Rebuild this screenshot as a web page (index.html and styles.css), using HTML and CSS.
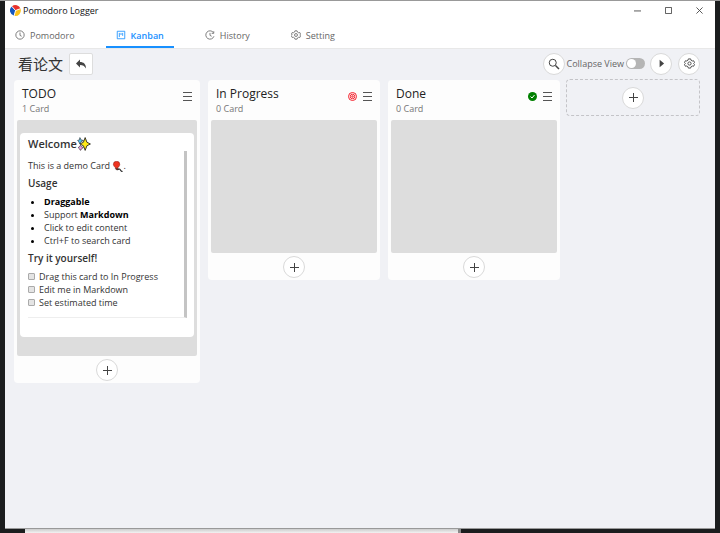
FILE: index.html
```html
<!DOCTYPE html>
<html lang="en">

<head>
  <meta charset="UTF-8" />
  <meta name="viewport" content="width=device-width, initial-scale=1.0" />
  <title>Pomodoro Logger</title>
  <link rel="stylesheet" href="styles.css">
</head>

<body>
  <div class="app">
    <header class="title-bar">
      <svg class="logo" viewBox="0 0 24 24">
        <path d="M12 12 L4 3 A12 12 0 0 1 23 8 Z" fill="#e8322c" />
        <path d="M12 12 L4 3 A12 12 0 0 0 9 23.6 Z" fill="#1557c0" />
        <path d="M12 12 L23 8 A12 12 0 0 1 9 23.6 Z" fill="#fcc21b" />
        <path d="M12 12 L4 3 M12 12 L23 8 M12 12 L9 23.6" stroke="#fff" stroke-width="2" />
      </svg>
      <span class="app-name">Pomodoro Logger</span>
      <div class="window-controls">
        <button class="window-button" aria-label="Minimize"><svg viewBox="0 0 8 8"><path d="M0 4.5H8" /></svg></button>
        <button class="window-button" aria-label="Maximize"><svg viewBox="0 0 8 8"><path d="M.5 .5H7.5V7.5H.5Z" /></svg></button>
        <button class="window-button" aria-label="Close"><svg viewBox="0 0 8 8"><path d="M.5 .5L7.5 7.5M7.5 .5L.5 7.5" /></svg></button>
      </div>
    </header>

    <nav class="tabs">
      <a href="#pomodoro" class="tab">
        <svg class="icon" viewBox="0 0 24 24"><circle cx="12" cy="12" r="10" /><path d="M12 6V13L16 15" /></svg>
        Pomodoro
      </a>
      <a href="#kanban" class="tab active">
        <svg class="icon" viewBox="0 0 24 24"><path d="M3 3H21V21H3ZM8 7V17M12 7V12M16 7V14" /></svg>
        Kanban
      </a>
      <a href="#history" class="tab">
        <svg class="icon" viewBox="0 0 24 24"><path d="M20 6A10 10 0 1 0 21.500 15M21 3V8H16M12 7V13L16 15" /></svg>
        History
      </a>
      <a href="#setting" class="tab">
        <svg class="icon" viewBox="0 0 24 24"><path d="M9.500 2H14.500L15.500 5L18 6.500L21 6L23 10L21 12L23 14L21 18L18 17.500L15.500 19L14.500 22H9.500L8.500 19L6 17.500L3 18L1 14L3 12L1 10L3 6L6 6.500L8.500 5Z" /><circle cx="12" cy="12" r="3.500" /></svg>
        Setting
      </a>
    </nav>

    <main class="kanban">
      <div class="toolbar">
        <h1 class="board-name">看论文</h1>
        <button class="back-button" aria-label="Back">
          <svg class="icon" viewBox="0 0 24 24"><path class="solid" d="M10 3V8C17 8 22 12 22 21C19 16 16 14 10 14V19L2 11Z" /></svg>
        </button>
        <div class="tools">
          <button class="round-button search" aria-label="Search">
            <svg class="icon" viewBox="0 0 24 24"><circle cx="9.500" cy="9.500" r="7" /><path d="M15 15L22 22" stroke-width="3" /></svg>
          </button>
          <label class="switch">Collapse View <input type="checkbox" class="switch-input"></label>
          <button class="round-button play" aria-label="Start">
            <svg class="icon" viewBox="0 0 24 24"><path class="solid" d="M7 2L19 12L7 22Z" /></svg>
          </button>
          <button class="round-button config" aria-label="Board settings">
            <svg class="icon" viewBox="0 0 24 24"><path d="M9.500 2H14.500L15.500 5L18 6.500L21 6L23 10L21 12L23 14L21 18L18 17.500L15.500 19L14.500 22H9.500L8.500 19L6 17.500L3 18L1 14L3 12L1 10L3 6L6 6.500L8.500 5Z" /><circle cx="12" cy="12" r="3.500" /></svg>
          </button>
        </div>
      </div>

      <div class="board">
        <section class="column wide">
          <div class="column-header">
            <div class="column-info">
              <h2>TODO</h2>
              <p>1 Card</p>
            </div>
            <button class="menu-button" aria-label="TODO menu"><svg viewBox="0 0 9 9"><path d="M0 .5H9M0 4.500H9M0 8.500H9" /></svg></button>
          </div>
          <div class="card-list">
            <article class="card">
              <h3 class="card-title">Welcome<svg class="emoji" viewBox="0 0 24 24">
                <path d="M5 1L7 5L11 6L7 8L5 12L3 8L1 6L4 5Z" fill="#4fc3f7" stroke="#222" />
                <path d="M6 14L8 17L11 18L8 20L6 23L4 20L2 18L4 17Z" fill="#e79be0" stroke="#222" />
                <path d="M14 1L17 9L23 12L17 15L14 23L11 15L5 12L11 9Z" fill="#ffea19" stroke="#222" stroke-width="1.500" />
              </svg></h3>
              <div class="card-content">
                <p>This is a demo Card <svg class="emoji small" viewBox="0 0 24 24">
                  <path d="M10 16C13 23 15 14 18 19S21 22 23 23" fill="none" stroke="#222" stroke-width="2.500" />
                  <path d="M10 17C5 13 3 10 3 7A7 6.500 0 0 1 17 7C17 11 14 14 10 17Z" fill="#ef3320" stroke="#7d1710" />
                  <path d="M7 16H14L12 19H9Z" fill="#b5281b" />
                </svg>.</p>
                <h4>Usage</h4>
                <ul class="bullets">
                  <li><strong>Draggable</strong></li>
                  <li>Support <strong>Markdown</strong></li>
                  <li>Click to edit content</li>
                  <li>Ctrl+F to search card</li>
                </ul>
                <h4>Try it yourself!</h4>
                <ul class="tasks">
                  <li><label><input type="checkbox">Drag this card to In Progress</label></li>
                  <li><label><input type="checkbox">Edit me in Markdown</label></li>
                  <li><label><input type="checkbox">Set estimated time</label></li>
                </ul>
              </div>
            </article>
          </div>
          <button class="round-button add" aria-label="Add card"><svg viewBox="0 0 9 9"><path d="M4.500 0V9M0 4.500H9" /></svg></button>
        </section>

        <section class="column">
          <div class="column-header">
            <div class="column-info">
              <h2>In Progress</h2>
              <p>0 Card</p>
            </div>
            <svg class="mark target" viewBox="0 0 18 18"><circle cx="9" cy="9" r="8" /><circle cx="9" cy="9" r="4.500" /><circle cx="9" cy="9" r="1.500" /></svg>
            <button class="menu-button" aria-label="In Progress menu"><svg viewBox="0 0 9 9"><path d="M0 .5H9M0 4.500H9M0 8.500H9" /></svg></button>
          </div>
          <div class="card-list"></div>
          <button class="round-button add" aria-label="Add card"><svg viewBox="0 0 9 9"><path d="M4.500 0V9M0 4.500H9" /></svg></button>
        </section>

        <section class="column">
          <div class="column-header">
            <div class="column-info">
              <h2>Done</h2>
              <p>0 Card</p>
            </div>
            <svg class="mark done" viewBox="0 0 18 18"><circle cx="9" cy="9" r="9" /><path d="M5 9L8 12L13 6" /></svg>
            <button class="menu-button" aria-label="Done menu"><svg viewBox="0 0 9 9"><path d="M0 .5H9M0 4.500H9M0 8.500H9" /></svg></button>
          </div>
          <div class="card-list"></div>
          <button class="round-button add" aria-label="Add card"><svg viewBox="0 0 9 9"><path d="M4.500 0V9M0 4.500H9" /></svg></button>
        </section>

        <div class="new-column">
          <button class="round-button add" aria-label="Add list"><svg viewBox="0 0 9 9"><path d="M4.500 0V9M0 4.500H9" /></svg></button>
        </div>
      </div>
    </main>
  </div>
  <div class="back-window"></div>
</body>

</html>
```

FILE: styles.css
```css
* {
  box-sizing: border-box;
}

body {
  margin: 0;
  height: 100vh;
  display: flex;
  flex-direction: column;
  background: #1b1d1e;
  border-top: 1px solid #999;
  font-family: "Open Sans", "Noto Sans", "Noto Sans CJK SC", sans-serif;
  font-size: 9px;
  line-height: 13px;
  color: #333;
}

h1, h2, h3, h4, p, ul {
  margin: 0;
  padding: 0;
  font-weight: 400;
}

button {
  font: inherit;
  padding: 0;
  cursor: pointer;
}

svg {
  fill: none;
  stroke: currentColor;
}

.app {
  flex: 1;
  margin: 0 5px;
  display: flex;
  flex-direction: column;
  background: #f0f1f5;
  border-bottom: 1px solid #999;
}

/* window behind the app */
.back-window {
  height: 4px;
  width: 436px;
  margin-left: 25px;
  background: linear-gradient(#ccc, #f2f2f2);
  border-right: 3px solid #888;
}

.title-bar {
  display: flex;
  align-items: center;
  height: 19px;
  padding-left: 5px;
  background: #fff;
  color: #111;
}

.logo {
  width: 11px;
  height: 11px;
  margin-right: 2px;
  stroke: none;
}

.window-controls {
  display: flex;
  margin-left: auto;
}

.window-button {
  display: flex;
  align-items: center;
  justify-content: center;
  width: 31px;
  height: 19px;
  border: none;
  background: none;
  color: #444;
}

.window-button svg {
  width: 7px;
  height: 7px;
}

.tabs {
  display: flex;
  gap: 21px;
  height: 29px;
  background: #fff;
  border-bottom: 1px solid #e8e8e8;
}

.tab {
  display: flex;
  align-items: center;
  gap: 5px;
  padding: 4px 10px 0;
  color: #666;
  text-decoration: none;
  border-bottom: 2px solid transparent;
}

.tab.active {
  color: #1890ff;
  font-weight: 600;
  border-bottom-color: #1890ff;
}

.icon {
  width: 10px;
  height: 10px;
  stroke-width: 2;
}

.solid {
  fill: currentColor;
  stroke: none;
}

.kanban {
  flex: 1;
  padding: 3px 15px 0 9px;
}

.toolbar {
  display: flex;
  align-items: center;
  height: 23px;
  padding-left: 4px;
}

.board-name {
  font-size: 15px;
  line-height: 22px;
}

.back-button {
  display: flex;
  align-items: center;
  justify-content: center;
  width: 24px;
  height: 22px;
  margin-left: 6px;
  background: #fff;
  border: 1px solid #ddd;
  border-radius: 2px;
  color: #444;
}

.back-button .icon {
  width: 12px;
  height: 12px;
}

.tools {
  display: flex;
  align-items: center;
  margin-left: auto;
}

.round-button {
  display: flex;
  align-items: center;
  justify-content: center;
  width: 22px;
  height: 22px;
  background: #fff;
  border: 1px solid #d9d9d9;
  border-radius: 50%;
  color: #444;
}

.round-button.play {
  margin: 0 6px 0 5px;
}

.round-button .icon {
  width: 11px;
  height: 11px;
}

.round-button.search .icon {
  width: 12px;
  height: 12px;
}

.round-button.play .icon {
  width: 9px;
  height: 9px;
}

.switch {
  display: flex;
  align-items: center;
  gap: 2px;
  margin-left: 2px;
  color: #666;
}

.switch-input {
  appearance: none;
  width: 19px;
  height: 11px;
  margin: 0;
  padding: 1px;
  border-radius: 6px;
  background: #b5b5b5;
}

.switch-input::before {
  content: "";
  display: block;
  width: 9px;
  height: 9px;
  border-radius: 50%;
  background: #fff;
}

.switch-input:checked {
  background: #1890ff;
}

.switch-input:checked::before {
  margin-left: auto;
}

.board {
  display: flex;
  align-items: flex-start;
  gap: 8px;
  margin-top: 5px;
}

.column {
  flex: 1 1 172px;
  padding: 0 3px 2px;
  background: #fdfdfd;
  border-radius: 4px;
}

.column.wide {
  flex-basis: 186px;
}

.column-header {
  display: flex;
  align-items: center;
  gap: 6px;
  height: 40px;
  padding: 0 5px;
}

.column-info {
  flex: 1;
}

.column-info h2 {
  font-size: 12px;
  line-height: 16px;
  font-weight: 500;
  color: #222;
}

.column-info p {
  color: #777;
}

.menu-button {
  display: flex;
  margin-top: -8px;
  border: none;
  background: none;
  color: #555;
}

.menu-button svg {
  width: 9px;
  height: 9px;
}

.mark {
  width: 9px;
  height: 9px;
  margin-top: -8px;
  stroke-width: 2;
}

.target {
  color: #f5222d;
}

.done {
  fill: #008000;
  stroke: none;
}

.done path {
  fill: none;
  stroke: #fff;
}

.card-list {
  min-height: 133px;
  padding: 13px 3px 19px;
  background: #ddd;
  border-radius: 2px;
}

.card {
  padding: 3px 7px 19px 8px;
  background: #fff;
  border-radius: 4px;
}

.card-title {
  font-size: 11px;
  line-height: 15px;
  font-weight: 600;
}

.emoji {
  width: 14px;
  height: 14px;
  vertical-align: -3px;
}

.emoji.small {
  width: 11px;
  height: 11px;
}

.card-content {
  padding: 8px 0;
  border-right: 3px solid #c4c4c4;
  border-bottom: 1px solid #eee;
}

.card-content h4 {
  margin: 5px 0;
  font-size: 10px;
  font-weight: 600;
}

.bullets {
  padding-left: 16px;
}

.bullets strong {
  color: #000;
}

.bullets li::marker {
  color: #000;
}

.tasks {
  list-style: none;
}

.tasks label {
  display: flex;
  align-items: center;
  gap: 4px;
}

.tasks input {
  appearance: none;
  width: 7px;
  height: 7px;
  margin: 0;
  background: #e4e4e4;
  border: 1px solid #aaa;
  border-radius: 1px;
}

.tasks input:checked {
  background: #1890ff;
}

.round-button.add {
  margin: 3px auto 0;
}

.add svg {
  width: 9px;
  height: 9px;
}

.new-column {
  display: flex;
  align-items: center;
  flex: 1 1 134px;
  height: 37px;
  margin: -1px 0 0 -2px;
  border: 1px dashed #c4c4c8;
  border-radius: 4px;
}

.new-column .round-button {
  margin: 0 auto;
}
```
